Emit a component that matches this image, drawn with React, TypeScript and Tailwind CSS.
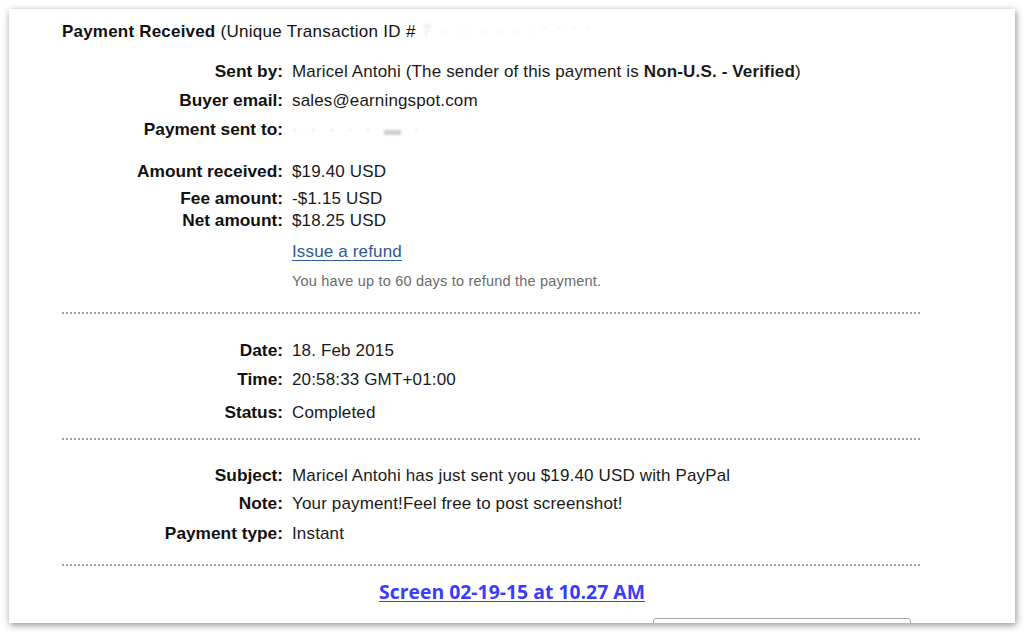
import React from "react";

const font = { fontFamily: '"Liberation Sans", Arial, sans-serif' };

function Row({
  label,
  children,
  h = "h-[28px]",
  mt,
}: {
  label?: string;
  children: React.ReactNode;
  h?: string;
  mt: string;
}) {
  return (
    <div className={`flex items-center ${h} ${mt}`}>
      <div className="w-[274px] shrink-0 text-right font-bold text-[17.3px] text-[#111]">
        {label}
      </div>
      <div className="ml-[9px] text-[17px] tracking-[0.15px] text-[#1a1a1a] whitespace-nowrap">
        {children}
      </div>
    </div>
  );
}

function Dots({ mt }: { mt: string }) {
  return (
    <div
      className={`${mt} ml-[53px] w-[858px] h-[2px] bg-[repeating-linear-gradient(90deg,#a0a0a0_0px,#a0a0a0_2px,transparent_2px,transparent_4px)]`}
    />
  );
}

export default function App() {
  return (
    <div className="w-[1024px] h-[632px] bg-white pt-[9px] pl-[9px]" style={font}>
      <div className="w-[1006px] h-[614px] bg-white overflow-hidden shadow-[1px_2px_7px_rgba(0,0,0,0.45)] flow-root">
        <div className="h-[28px] mt-[9px] pl-[53px] flex items-center text-[17px] text-[#111] whitespace-nowrap">
          <span className="font-bold tracking-[0.2px]">Payment Received</span>
          <span className="ml-[5px] tracking-[0.3px]">(Unique Transaction ID #</span>
          <span className="ml-[6px] text-[#e0e0e0] blur-[1.5px] tracking-[2px]">7 · ·  ·  ·  ·  · ·</span>
          <span className="ml-[8px] text-[#e0e0e0] blur-[1.5px] tracking-[2px] -mt-[8px]">·  ·  ·  ·</span>
        </div>

        <Row label="Sent by:" mt="mt-[12px]">
          Maricel Antohi (The sender of this payment is{" "}
          <span className="font-bold">Non-U.S. - Verified</span>)
        </Row>
        <Row label="Buyer email:" mt="mt-[1px]">
          sales@earningspot.com
        </Row>
        <Row label="Payment sent to:" mt="mt-[1px]">
          <span className="text-[#d0d0d0] blur-[1px] tracking-[4px]">·  ·  ·  ·  ·  ▬ ·</span>
        </Row>

        <Row label="Amount received:" mt="mt-[14px]">
          $19.40 USD
        </Row>
        <Row label="Fee amount:" mt="mt-[2px]" h="h-[22px]">
          -$1.15 USD
        </Row>
        <Row label="Net amount:" mt="mt-[0px]" h="h-[22px]">
          $18.25 USD
        </Row>
        <Row mt="mt-[6px]">
          <span className="text-[#2d5a94] underline underline-offset-[3px]">
            Issue a refund
          </span>
        </Row>
        <Row mt="mt-[1px]">
          <span className="text-[14.5px] text-[#6b6b6b] tracking-[0.2px]">
            You have up to 60 days to refund the payment.
          </span>
        </Row>

        <Dots mt="mt-[17px]" />

        <Row label="Date:" mt="mt-[23px]">
          18. Feb 2015
        </Row>
        <Row label="Time:" mt="mt-[1px]">
          20:58:33 GMT+01:00
        </Row>
        <Row label="Status:" mt="mt-[5px]">
          Completed
        </Row>

        <Dots mt="mt-[11px]" />

        <Row label="Subject:" mt="mt-[22px]">
          Maricel Antohi has just sent you $19.40 USD with PayPal
        </Row>
        <Row label="Note:" mt="mt-[0px]">
          Your payment!Feel free to post screenshot!
        </Row>
        <Row label="Payment type:" mt="mt-[2px]">
          Instant
        </Row>

        <Dots mt="mt-[16px]" />

        <div className="mt-[12px] h-[28px] flex items-center justify-center">
          <span
            className="text-[19.4px] font-bold text-[#3b3bff] underline underline-offset-[2px]"
            style={{ fontFamily: '"Open Sans", "Noto Sans", sans-serif' }}
          >
            Screen 02-19-15 at 10.27 AM
          </span>
        </div>

        <div className="mt-[12px] ml-[644px] w-[258px] h-[20px] border border-[#aaa] rounded-[3px]" />
      </div>
    </div>
  );
}
